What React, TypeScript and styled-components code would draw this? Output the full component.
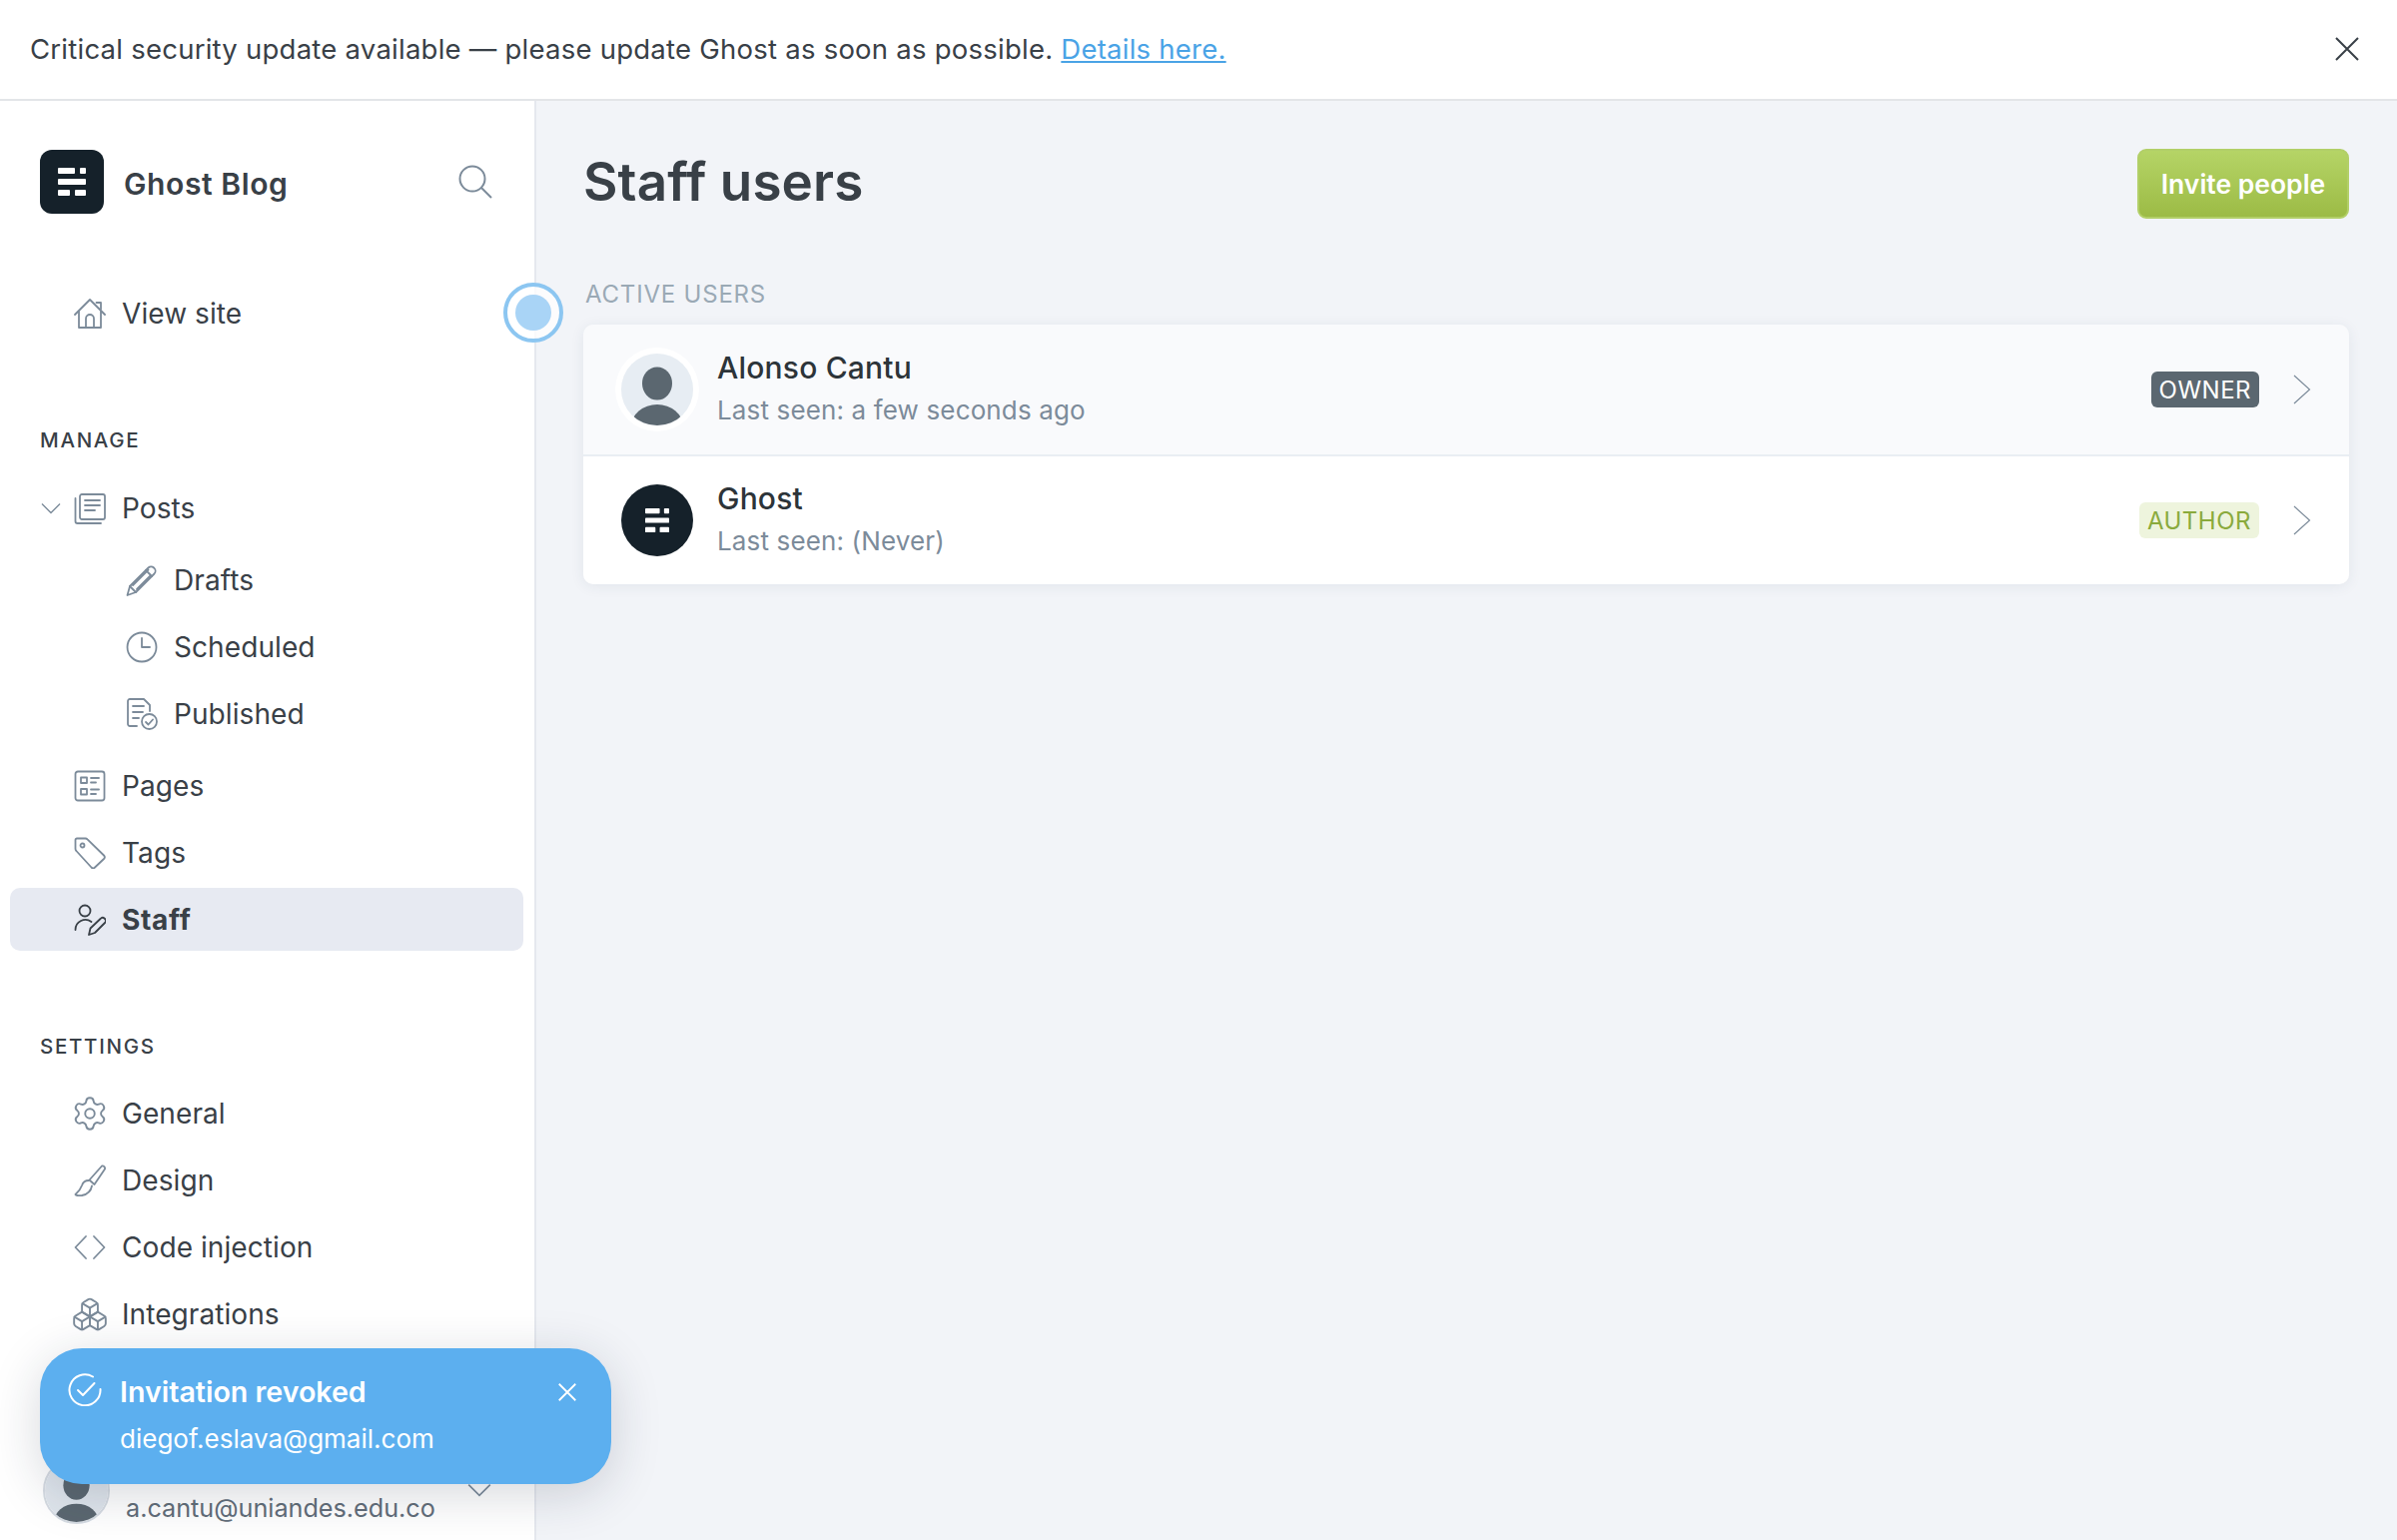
import React from 'react';
import styled, { createGlobalStyle } from 'styled-components';
import { Boxes, Settings } from 'lucide-react';

const GlobalStyle = createGlobalStyle`
  html, body {
    margin: 0;
    padding: 0;
    background: #fff;
  }
  body {
    font-family: Inter, "Noto Sans", sans-serif;
    color: #394047;
  }
  * {
    box-sizing: border-box;
  }
`;

const Page = styled.div`
  position: relative;
  width: 2400px;
  height: 1542px;
  overflow: hidden;
  display: flex;
  flex-direction: column;
`;

const Banner = styled.div`
  flex: none;
  height: 101px;
  padding: 0 38px 2px 30px;
  display: flex;
  align-items: center;
  justify-content: space-between;
  border-bottom: 2px solid #e3e5e8;
  font-size: 27.5px;
  letter-spacing: 0.24px;
  color: #394047;
  a {
    color: #4aa3e6;
    text-decoration: underline;
  }
`;

const Body = styled.div`
  flex: 1;
  display: flex;
  min-height: 0;
`;

const Sidebar = styled.aside`
  flex: none;
  width: 537px;
  height: 100%;
  display: flex;
  flex-direction: column;
  background: #fff;
  border-right: 2px solid #e5e8ee;
`;

const Brand = styled.div`
  display: flex;
  align-items: center;
  height: 64px;
  margin-top: 49px;
  padding: 0 42px 0 40px;
`;

const BrandLogo = styled.div`
  width: 64px;
  height: 64px;
  border-radius: 12px;
  background: #15212a;
  display: flex;
  align-items: center;
  justify-content: center;
`;

const BrandName = styled.div`
  flex: 1;
  margin: 3px 0 0 20px;
  font-size: 30px;
  font-weight: 600;
  letter-spacing: 0.6px;
  color: #394047;
`;

const Nav = styled.nav<{ $top: number }>`
  display: flex;
  flex-direction: column;
  gap: 4px;
  margin-top: ${(p) => p.$top}px;
`;

const SubNav = styled(Nav)`
  margin-bottom: 5px;
`;

const NavRow = styled.div<{ $active?: boolean; $sub?: boolean }>`
  display: flex;
  align-items: center;
  gap: 16px;
  width: 514px;
  height: 63px;
  margin-left: 10px;
  padding-left: ${(p) => (p.$sub ? 116 : 64)}px;
  border-radius: 10px;
  font-size: 28px;
  letter-spacing: ${(p) => (p.$active ? 0.7 : 0.08)}px;
  font-weight: ${(p) => (p.$active ? 700 : 400)};
  color: #394047;
  background: ${(p) => (p.$active ? '#e7eaf2' : 'transparent')};
  svg {
    flex: none;
    color: ${(p) => (p.$active ? '#394047' : '#7c8b9a')};
  }
`;

const Caret = styled.span`
  display: flex;
  margin-left: -33px;
  margin-right: -3px;
`;

const WideIcon = styled.span`
  display: flex;
  margin: 0 -3px;
`;

const SectionLabel = styled.div<{ $top: number }>`
  margin: ${(p) => p.$top}px 0 0 40px;
  font-size: 20.5px;
  line-height: 24px;
  font-weight: 500;
  letter-spacing: 1.7px;
  color: #394047;
`;

const UserMenu = styled.div`
  margin-top: auto;
  padding: 0 0 15px 43px;
  display: flex;
  align-items: center;
`;

const UserAvatar = styled.div`
  flex: none;
  width: 67px;
  height: 67px;
  border-radius: 50%;
  overflow: hidden;
  border: 2px solid #d5dbe2;
`;

const UserInfo = styled.div`
  flex: none;
  width: 342px;
  margin-left: 16px;
  padding-top: 2px;
`;

const UserName = styled.div`
  font-size: 28px;
  font-weight: 600;
  line-height: 34px;
`;

const UserEmail = styled.div`
  font-size: 25.2px;
  line-height: 34px;
  color: #626d79;
`;

const Main = styled.main`
  flex: 1;
  padding: 48px 48px 0 47px;
  background: #f2f4f8;
`;

const MainHeader = styled.header`
  display: flex;
  align-items: center;
  justify-content: space-between;
  height: 70px;
`;

const Title = styled.h1`
  margin: 0 0 4px;
  font-size: 53px;
  font-weight: 600;
  letter-spacing: 0.1px;
  color: #394047;
`;

const InviteButton = styled.button`
  width: 212px;
  height: 70px;
  border: 2px solid #b2cf68;
  border-radius: 9px;
  background: linear-gradient(#b5d466, #9cbb45);
  color: #fff;
  font-family: inherit;
  font-size: 26.5px;
  font-weight: 600;
`;

const ListLabel = styled.div`
  margin: 61px 0 15px 2px;
  font-size: 24px;
  line-height: 30px;
  letter-spacing: 0.8px;
  color: #9aa9b5;
`;

const UserList = styled.div`
  border-radius: 10px;
  overflow: hidden;
  box-shadow: 0 2px 14px rgba(40, 60, 90, 0.08);
`;

const UserRow = styled.div<{ $hover?: boolean }>`
  display: flex;
  align-items: center;
  height: ${(p) => (p.$hover ? 132 : 128)}px;
  padding: 0 38px 0 38px;
  background: ${(p) => (p.$hover ? '#f9fafc' : '#fff')};
  border-bottom: ${(p) => (p.$hover ? '2px solid #e9eef3' : 'none')};
`;

const AvatarRing = styled.div`
  flex: none;
  width: 72px;
  height: 72px;
  border-radius: 50%;
  overflow: hidden;
  box-shadow: 0 0 0 6px #fff;
`;

const GhostAvatar = styled.div`
  flex: none;
  width: 72px;
  height: 72px;
  border-radius: 50%;
  background: #15212a;
  display: flex;
  align-items: center;
  justify-content: center;
`;

const RowText = styled.div`
  flex: 1;
  margin: -1px 0 0 24px;
`;

const RowName = styled.div`
  font-size: 30px;
  line-height: 40px;
  font-weight: 500;
  letter-spacing: 0.2px;
  color: #2d3439;
`;

const RowMeta = styled.div`
  margin-top: 3px;
  font-size: 26px;
  line-height: 40px;
  letter-spacing: 0.14px;
  color: #7c8b9a;
`;

const RoleBadge = styled.span<{ $role: 'owner' | 'author' }>`
  height: 36px;
  padding: 0 8px;
  border-radius: 6px;
  display: flex;
  align-items: center;
  font-size: 24px;
  letter-spacing: 0.5px;
  color: ${(p) => (p.$role === 'owner' ? '#fff' : '#8aaa3c')};
  background: ${(p) => (p.$role === 'owner' ? '#5b6770' : '#eef4dd')};
`;

const RowCaret = styled.span`
  display: flex;
  margin-left: 34px;
`;

const PulseDot = styled.div`
  position: absolute;
  left: 504px;
  top: 283px;
  width: 60px;
  height: 60px;
  border-radius: 50%;
  border: 4px solid #8cc6f1;
  background: rgba(255, 255, 255, 0.75);
  display: flex;
  align-items: center;
  justify-content: center;
  &::after {
    content: '';
    width: 36px;
    height: 36px;
    border-radius: 50%;
    background: #a9d4f6;
  }
`;

const Toast = styled.div`
  position: absolute;
  left: 40px;
  top: 1350px;
  width: 572px;
  height: 136px;
  padding: 24px 35px 0 28px;
  border-radius: 42px;
  background: #5cafef;
  color: #fff;
  display: flex;
  box-shadow: 0 10px 50px rgba(30, 40, 60, 0.18);
`;

const ToastText = styled.div`
  flex: 1;
  margin-left: 18px;
`;

const ToastTitle = styled.div`
  font-size: 28.6px;
  line-height: 40px;
  font-weight: 600;
`;

const ToastBody = styled.div`
  margin-top: 7px;
  font-size: 26px;
  line-height: 40px;
`;

const ToastClose = styled.span`
  display: flex;
  margin-top: 11px;
`;

type IconProps = { size?: number };

const Line = ({ size = 32, children }: IconProps & { children: React.ReactNode }) => (
  <svg
    width={size}
    height={size}
    viewBox="0 0 32 32"
    fill="none"
    stroke="currentColor"
    strokeWidth={1.8}
    strokeLinecap="round"
    strokeLinejoin="round"
  >
    {children}
  </svg>
);

const HomeIcon = () => (
  <Line>
    <path d="M1 17 16 2l15 15" />
    <path d="M22.5 5h4.5v6.5" />
    <path d="M5 14v16h22V14" />
    <path d="M12 30V21a4 4 0 0 1 8 0v9" />
  </Line>
);
const PostsIcon = () => (
  <Line>
    <rect x="6" y="2" width="25" height="25" rx="2" />
    <path d="M11 8h15M11 13h15M11 18h10" />
    <path d="M1.5 6v23a2 2 0 0 0 2 2H27" />
  </Line>
);
const PencilIcon = () => (
  <Line>
    <path d="M1.5 31 4 22 22.500 3.500a4 4 0 0 1 5.500 0l.5.5a4 4 0 0 1 0 5.500L10 28Z" />
    <path d="M4 22l6 6M20 6l6 6M7 21 22.500 5.500M11 25 25 11" />
  </Line>
);
const ClockIcon = () => (
  <Line>
    <circle cx="16" cy="16" r="14.5" />
    <path d="M16 7v9h8" />
  </Line>
);
const PublishedIcon = () => (
  <Line>
    <path d="M11 28H4a2 2 0 0 1-2-2V3a2 2 0 0 1 2-2h14l6 6v6" />
    <path d="M7 8h11M7 14h10M7 20h6" />
    <circle cx="23.5" cy="23.5" r="7.5" />
    <path d="M20 24l2.500 2.500 4.500-5" />
  </Line>
);
const PagesIcon = () => (
  <Line>
    <rect x="1.5" y="1.5" width="29" height="29" rx="2.5" />
    <rect x="7" y="7.5" width="6" height="5.5" />
    <rect x="7" y="19" width="6" height="5.5" />
    <path d="M17 8h8M17 12.500h5M17 19.500h8M17 24h5" />
  </Line>
);
const TagIcon = () => (
  <Line>
    <path d="M3 1.500h8.500a3 3 0 0 1 2 .9L30 18.500a2.500 2.500 0 0 1 0 3.500L21 30.500a2.500 2.500 0 0 1-3.500 0L2.400 14a3 3 0 0 1-.9-2V3A1.500 1.500 0 0 1 3 1.500Z" />
    <circle cx="8.5" cy="8.5" r="2" />
  </Line>
);
const StaffIcon = () => (
  <Line>
    <circle cx="11" cy="7" r="5.5" />
    <path d="M1.500 26a10 10 0 0 1 16-8" />
    <path d="M15 31l1.500-6.500L26.500 15a3 3 0 0 1 4.500 4L21 29Z" />
  </Line>
);
const BrushIcon = () => (
  <Line>
    <path d="M28 1.500a2.500 2.500 0 0 1 3 3L20.500 20l-5-4.500Z" />
    <path d="M15 16c-3 0-6 1.500-7 5-1 3-3 6-6.500 9 .5 1 3 1.500 6.500 1 5-1 9-4 10-9.500" />
  </Line>
);
const CodeIcon = () => (
  <Line>
    <path d="M12 5 1.500 16 12 27M20 5l10.500 11L20 27" />
  </Line>
);
const ChevronDown = ({ size = 20 }: IconProps) => (
  <svg width={size} height={size} viewBox="0 0 20 20" fill="none" stroke="#7c8b9a" strokeWidth={1.4}>
    <path d="M1 5.500 10 14.500 19 5.500" />
  </svg>
);
const ChevronRight = () => (
  <svg width="18" height="30" viewBox="0 0 18 30" fill="none" stroke="#7c8b9a" strokeWidth={1.2}>
    <path d="M1 1 16.500 15 1 29" />
  </svg>
);
const CloseIcon = ({ size = 24 }: IconProps) => (
  <svg width={size} height={size} viewBox="0 0 24 24" fill="none" stroke="currentColor" strokeWidth={size > 20 ? 2 : 2.4}>
    <path d="M1 1 23 23M23 1 1 23" />
  </svg>
);
const SearchIcon = () => (
  <svg width="34" height="34" viewBox="0 0 34 34" fill="none" stroke="#7c8b9a" strokeWidth={2}>
    <circle cx="14" cy="14" r="12.5" />
    <path d="M23 23 33 33" />
  </svg>
);
const CheckCircle = () => (
  <svg width="34" height="34" viewBox="0 0 34 34" fill="none" stroke="#fff" strokeWidth={2} strokeLinecap="round" strokeLinejoin="round">
    <path d="M25 4.500A15.500 15.500 0 1 0 32.500 17" />
    <path d="M10 18l5 5 11.500-12" />
  </svg>
);
const GhostMark = ({ size }: { size: number }) => (
  <svg width={size} height={size} viewBox="0 0 28 28" fill="#fff">
    <rect x="0" y="0" width="17" height="6" rx="1" />
    <rect x="22" y="0" width="6" height="6" rx="1" />
    <rect x="0" y="11" width="28" height="6" rx="1" />
    <rect x="0" y="22" width="12" height="6" rx="1" />
    <rect x="17" y="22" width="11" height="6" rx="1" />
  </svg>
);
const PersonAvatar = ({ size, bg }: { size: number; bg: string }) => (
  <svg width={size} height={size} viewBox="0 0 72 72">
    <rect width="72" height="72" fill={bg} />
    <ellipse cx="36" cy="30" rx="15" ry="16.5" fill="#5b6770" />
    <ellipse cx="36" cy="73" rx="26" ry="22" fill="#5b6770" />
  </svg>
);

const manageTop = [
  { label: 'Pages', icon: <PagesIcon /> },
  { label: 'Tags', icon: <TagIcon /> },
];
const postChildren = [
  { label: 'Drafts', icon: <PencilIcon /> },
  { label: 'Scheduled', icon: <ClockIcon /> },
  { label: 'Published', icon: <PublishedIcon /> },
];
const settings = [
  { label: 'General', icon: <WideIcon><Settings size={38} strokeWidth={1.2} /></WideIcon> },
  { label: 'Design', icon: <BrushIcon /> },
  { label: 'Code injection', icon: <CodeIcon /> },
  { label: 'Integrations', icon: <WideIcon><Boxes size={38} strokeWidth={1.2} /></WideIcon> },
];

export default function App() {
  return (
    <Page>
      <GlobalStyle />
      <Banner>
        <span>
          Critical security update available — please update Ghost as soon as possible.{' '}
          <a href="#details">Details here.</a>
        </span>
        <CloseIcon />
      </Banner>
      <Body>
        <Sidebar>
          <Brand>
            <BrandLogo>
              <GhostMark size={28} />
            </BrandLogo>
            <BrandName>Ghost Blog</BrandName>
            <SearchIcon />
          </Brand>
          <Nav $top={68}>
            <NavRow>
              <HomeIcon />
              View site
            </NavRow>
          </Nav>
          <SectionLabel $top={84}>MANAGE</SectionLabel>
          <Nav $top={24}>
            <NavRow>
              <Caret>
                <ChevronDown />
              </Caret>
              <PostsIcon />
              Posts
            </NavRow>
            <SubNav $top={5}>
              {postChildren.map((item) => (
                <NavRow $sub key={item.label}>
                  {item.icon}
                  {item.label}
                </NavRow>
              ))}
            </SubNav>
            {manageTop.map((item) => (
              <NavRow key={item.label}>
                {item.icon}
                {item.label}
              </NavRow>
            ))}
            <NavRow $active>
              <StaffIcon />
              Staff
            </NavRow>
          </Nav>
          <SectionLabel $top={84}>SETTINGS</SectionLabel>
          <Nav $top={23}>
            {settings.map((item) => (
              <NavRow key={item.label}>
                {item.icon}
                {item.label}
              </NavRow>
            ))}
          </Nav>
          <UserMenu>
            <UserAvatar>
              <PersonAvatar size={63} bg="#dfe5ec" />
            </UserAvatar>
            <UserInfo>
              <UserName>Alonso Cantu</UserName>
              <UserEmail>a.cantu@uniandes.edu.co</UserEmail>
            </UserInfo>
            <ChevronDown size={24} />
          </UserMenu>
        </Sidebar>
        <Main>
          <MainHeader>
            <Title>Staff users</Title>
            <InviteButton>Invite people</InviteButton>
          </MainHeader>
          <ListLabel>ACTIVE USERS</ListLabel>
          <UserList>
            <UserRow $hover>
              <AvatarRing>
                <PersonAvatar size={72} bg="#e7edf3" />
              </AvatarRing>
              <RowText>
                <RowName>Alonso Cantu</RowName>
                <RowMeta>Last seen: a few seconds ago</RowMeta>
              </RowText>
              <RoleBadge $role="owner">OWNER</RoleBadge>
              <RowCaret>
                <ChevronRight />
              </RowCaret>
            </UserRow>
            <UserRow>
              <GhostAvatar>
                <GhostMark size={24} />
              </GhostAvatar>
              <RowText>
                <RowName>Ghost</RowName>
                <RowMeta>Last seen: (Never)</RowMeta>
              </RowText>
              <RoleBadge $role="author">AUTHOR</RoleBadge>
              <RowCaret>
                <ChevronRight />
              </RowCaret>
            </UserRow>
          </UserList>
        </Main>
      </Body>
      <PulseDot />
      <Toast>
        <CheckCircle />
        <ToastText>
          <ToastTitle>Invitation revoked</ToastTitle>
          <ToastBody>diegof.eslava@gmail.com</ToastBody>
        </ToastText>
        <ToastClose>
          <CloseIcon size={18} />
        </ToastClose>
      </Toast>
    </Page>
  );
}
